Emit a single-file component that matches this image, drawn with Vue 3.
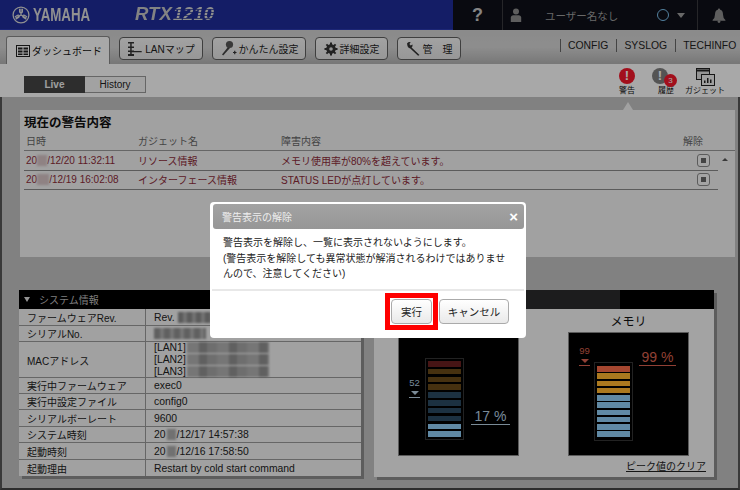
<script setup>
const navs = [
  { label: 'LANマップ', icon: 'lan', w: 84 },
  { label: 'かんたん設定', icon: 'key', w: 94 },
  { label: '詳細設定', icon: 'gear', w: 73 },
  { label: '管　理', icon: 'tool', w: 64 }
]
const alerts = [
  { pre: 20, maskW: 10, date: '/12/20 11:32:11', name: 'リソース情報', msg: 'メモリ使用率が80%を超えています。' },
  { pre: 20, maskW: 12, date: '/12/19 16:02:08', name: 'インターフェース情報', msg: 'STATUS LEDが点灯しています。' }
]
const cpuBars = ['r-off', 'o-off', 'o-off', 'o-off', 'b-off', 'b-off', 'b-off', 'b-off', 'b-on', 'b-on']
const memBars = ['r-on', 'o-on', 'o-on', 'o-on', 'b-on', 'b-on', 'b-on', 'b-on', 'b-on', 'b-on']
</script>

<template>
  <div class="app">
    <header class="top">
      <div class="brand">
        <svg class="emblem" viewBox="0 0 20 20" width="18" height="18">
          <circle cx="10" cy="10" r="8.8" fill="none" stroke="#d8d8d8" stroke-width="1.4" />
          <g stroke="#d8d8d8" stroke-width="1.3" fill="none">
            <path d="M10 10V3M8.4 3v3.4q0 1.2 1.6 1.6q1.6-.4 1.6-1.6V3" />
            <path d="M10 10L4 13.5M3.2 12.1l2.9-1.7q1.1-.5 2.2.5q-.3 1.5-1.5 2.2l-2.8 1.6" />
            <path d="M10 10L16 13.5M16.8 12.1l-2.9-1.7q-1.1-.5-2.2.5q.3 1.5 1.5 2.2l2.8 1.6" />
          </g>
        </svg>
        <span class="yamaha">YAMAHA</span>
        <span class="model">RTX<em>1210</em></span>
      </div>
      <div class="top-right">
        <span class="help">?</span>
        <div class="user">
          <svg width="12" height="14" viewBox="0 0 12 14"><circle cx="6" cy="3.4" r="3" fill="#8d8d8d" /><path d="M.8 14V9.6Q.8 7.4 3 7.2h6q2.2.2 2.2 2.4V14z" fill="#8d8d8d" /></svg>
          <span class="uname">ユーザー名なし</span>
          <i class="ring"></i>
          <i class="caret"></i>
        </div>
        <div class="bell">
          <svg width="14" height="15" viewBox="0 0 14 15"><path d="M7 .6q1.2 0 1.2 1.2Q11 2.6 11 6.5q0 3.5 2.4 5.6v.7H.6v-.7Q3 10 3 6.500q0-3.900 2.800-4.700Q5.800.6 7 .6z" fill="#8d8d8d" /><circle cx="7" cy="13.600" r="1.400" fill="#8d8d8d" /></svg>
        </div>
      </div>
    </header>

    <nav class="nav">
      <div class="tab">
        <svg width="14" height="12" viewBox="0 0 14 12"><rect x=".5" y=".5" width="13" height="11" fill="none" stroke="#222" /><path d="M2 2.500h4.500v2H2zM7.500 2.500H12v2H7.500zM2 5.500h4.500v2H2zM7.500 5.500H12v2H7.500zM2 8.500h4.500v1.500H2zM7.500 8.500H12v1.500H7.500z" fill="#222" /></svg>
        <span>ダッシュボード</span>
      </div>
      <button v-for="n in navs" :key="n.label" class="nav-btn" :style="{ width: n.w + 'px' }">
        <svg v-if="n.icon === 'lan'" width="16" height="16" viewBox="0 0 16 16"><path d="M1 1h6v1.500H1zM3.200 2.500h1.500v11H3.200zM1 5.500h6V7H1zM1 9.500h6V11H1zM1 13h6v2H1zM4.700 10h10v1.300h-10z" fill="#333" /></svg>
        <svg v-if="n.icon === 'key'" width="17" height="17" viewBox="0 0 17 17"><circle cx="9.500" cy="4.500" r="3.600" fill="#555" /><path d="M8 7L2 14.500l1.200 1L10 8z" fill="#444" /><path d="M13 12.500h3.500M14.750 10.750v3.500" stroke="#333" stroke-width="1.200" /></svg>
        <svg v-if="n.icon === 'gear'" width="14" height="14" viewBox="0 0 14 14"><circle cx="7" cy="7" r="3.600" fill="none" stroke="#333" stroke-width="2.400" /><path d="M7 .5v13M.5 7h13M2.400 2.400l9.200 9.200M11.600 2.400l-9.200 9.200" stroke="#333" stroke-width="2" /><circle cx="7" cy="7" r="1.800" fill="#ddd" /></svg>
        <svg v-if="n.icon === 'tool'" width="15" height="15" viewBox="0 0 15 15"><path d="M1 2.500Q2.500.6 4.700 1.200L3.400 3l1.200 1.400 1.900-1Q7 5.500 5.600 6.500L13.500 14l-1.400.8-7.800-7.300Q1.600 7.300 1 2.500z" fill="#333" /></svg>
        <span>{{ n.label }}</span>
      </button>
      <div class="links">
        <a>CONFIG</a><a>SYSLOG</a><a>TECHINFO</a>
      </div>
    </nav>

    <section class="sub">
      <div class="seg">
        <span class="seg-on">Live</span>
        <span class="seg-off">History</span>
      </div>
      <div class="tools">
        <div class="tool t1">
          <i class="dot red">!</i>
          <b>警告</b>
        </div>
        <div class="tool t2">
          <i class="dot grey">!<em>3</em></i>
          <b>履歴</b>
        </div>
        <div class="tool t3">
          <svg width="19" height="18" viewBox="0 0 19 18"><rect x=".5" y=".5" width="13" height="11" fill="#ddd" stroke="#222" /><path d="M.5 2.500h13" stroke="#222" stroke-width="2" /><rect x="5.500" y="6.500" width="13" height="11" fill="#eee" stroke="#222" /><path d="M8 15v-2.500h1.500V15zM11 15v-5h1.500v5zM14 15v-3.500h1.500V15z" fill="#222" /></svg>
          <b>ガジェット</b>
        </div>
      </div>
    </section>

    <main class="page">
      <section class="alert">
        <h2>現在の警告内容</h2>
        <div class="a-head">
          <span>日時</span><span>ガジェット名</span><span>障害内容</span><span class="a-clear">解除</span>
        </div>
        <div class="a-wrap">
          <div class="a-rows">
            <div v-for="a in alerts" :key="a.date" class="a-row">
              <span>{{ a.pre }}<i class="mask pink" :style="{ width: a.maskW + 'px' }"></i>{{ a.date }}</span>
              <span>{{ a.name }}</span>
              <span>{{ a.msg }}</span>
              <i class="check"><u></u></i>
            </div>
          </div>
          <i class="up"></i>
        </div>
      </section>

      <div class="bottom">
        <section class="sys">
          <div class="bar"><i class="down"></i><span>システム情報</span></div>
          <div class="row r17"><span class="k">ファームウェアRev.</span><span class="v">Rev.<i class="mask m1"></i></span></div>
          <div class="row r16"><span class="k">シリアルNo.</span><span class="v"><i class="mask m2"></i></span></div>
          <div class="row r36">
            <span class="k">MACアドレス</span>
            <span class="v stack">
              <span>[LAN1]<i class="mask m3"></i></span>
              <span>[LAN2]<i class="mask m3"></i></span>
              <span>[LAN3]<i class="mask m3"></i></span>
            </span>
          </div>
          <div class="row r16"><span class="k">実行中ファームウェア</span><span class="v">exec0</span></div>
          <div class="row r16"><span class="k">実行中設定ファイル</span><span class="v">config0</span></div>
          <div class="row r17"><span class="k">シリアルボーレート</span><span class="v">9600</span></div>
          <div class="row r16"><span class="k">システム時刻</span><span class="v">20<i class="mask m4"></i>/12/17 14:57:38</span></div>
          <div class="row r17"><span class="k">起動時刻</span><span class="v">20<i class="mask m4"></i>/12/16 17:58:50</span></div>
          <div class="row r16 last"><span class="k">起動理由</span><span class="v">Restart by cold start command</span></div>
        </section>

        <section class="res">
          <div class="bar res-bar"><span class="half"></span></div>
          <div class="gauges">
            <div class="gauge">
              <h3>&nbsp;</h3>
              <div class="screen cpu">
                <div class="peak blue"><span>52</span><i class="tri"></i><i class="dash"></i></div>
                <div class="meter"><i v-for="(b, i) in cpuBars" :key="i" :class="b"></i></div>
                <div class="val blue"><span>17 %</span></div>
              </div>
            </div>
            <div class="gauge">
              <h3>メモリ</h3>
              <div class="screen mem">
                <div class="peak red"><span>99</span><i class="tri"></i><i class="dash"></i></div>
                <div class="meter"><i v-for="(b, i) in memBars" :key="i" :class="b"></i></div>
                <div class="val red"><span>99 %</span></div>
              </div>
            </div>
          </div>
          <a class="clear">ピーク値のクリア</a>
        </section>
      </div>
    </main>

    <div class="overlay">
      <div class="modal">
        <div class="m-head"><span>警告表示の解除</span><b>×</b></div>
        <div class="m-body">
          警告表示を解除し、一覧に表示されないようにします。<br />
          (警告表示を解除しても異常状態が解消されるわけではありませんので、注意してください)
        </div>
        <div class="m-foot">
          <div class="hl"><button class="btn ok">実行</button></div>
          <button class="btn cancel">キャンセル</button>
        </div>
      </div>
    </div>
  </div>
</template>

<style scoped>
.app {
  position: relative;
  width: 740px;
  height: 490px;
  overflow: hidden;
  box-sizing: border-box;
  font-family: "Liberation Sans", "Noto Sans CJK JP", sans-serif;
  font-size: 10px;
  color: #222;
  background: #bfbfbf;
  display: flex;
  flex-direction: column;
}
button { font-family: inherit; padding: 0; }

.top {
  height: 30px;
  flex: none;
  display: flex;
  justify-content: space-between;
  background: #1e2c98;
  border-bottom: 1px solid #2a3ab0;
  box-sizing: border-box;
}
.brand { display: flex; align-items: center; padding-left: 12px; }
.emblem { margin-right: 3px; }
.yamaha {
  display: inline-block;
  width: 58px;
  font-size: 19px;
  font-weight: 700;
  color: #d8d8d8;
  transform: scaleX(.7);
  transform-origin: left center;
  white-space: nowrap;
}
.model {
  margin-left: 44px;
  font-size: 18px;
  font-weight: 700;
  font-style: italic;
  color: #c4c4c4;
  transform: scaleX(1.03);
  transform-origin: left center;
}
.model em {
  color: transparent;
  margin-left: 1px;
  background: repeating-linear-gradient(180deg, #d4d4d4 0 2px, #4a5599 2px 3px);
  -webkit-background-clip: text;
  background-clip: text;
}
.top-right {
  width: 287px;
  background: #0e1019;
  display: flex;
  align-items: center;
  color: #c0c0c0;
  margin-bottom: -1px;
}
.help {
  width: 50px;
  text-align: center;
  font-size: 18px;
  font-weight: 700;
  color: #c6c6c6;
  border-right: 1px solid #3a3a3e;
  height: 30px;
  line-height: 30px;
  box-sizing: border-box;
}
.user {
  width: 195px;
  height: 30px;
  display: flex;
  align-items: center;
  padding-left: 7px;
  border-right: 1px solid #3a3a3e;
  box-sizing: border-box;
}
.uname { margin-left: 23px; width: 112px; font-size: 10.500px; color: #9b9b9b; }
.ring { width: 10px; height: 10px; border: 1.500px solid #7cc0ec; border-radius: 50%; flex: none; }
.caret {
  margin-left: 8px;
  border-top: 5px solid #9c9c9c;
  border-left: 4px solid transparent;
  border-right: 4px solid transparent;
}
.bell { flex: 1; display: flex; justify-content: center; }

.nav {
  height: 34px;
  flex: none;
  display: flex;
  align-items: flex-start;
  padding-left: 6px;
  background: linear-gradient(180deg, #cfcfcf 0, #d3d3d3 50%, #b2b2b2 100%);
}
.tab {
  width: 104px;
  height: 28px;
  margin-top: 6px;
  box-sizing: border-box;
  background: #fbfbfb;
  border: 1px solid #888;
  border-bottom: 0;
  border-radius: 3px 3px 0 0;
  display: flex;
  align-items: center;
  gap: 2px;
  padding-left: 9px;
}
.tab span { white-space: nowrap; color: #111; }
.nav-btn {
  height: 23px;
  margin: 7px 0 0 9px;
  box-sizing: border-box;
  background: linear-gradient(180deg, #f2f2f2, #e2e2e2);
  border: 1px solid #5e5e5e;
  border-radius: 4px;
  display: flex;
  align-items: center;
  justify-content: center;
  gap: 2px;
  font-size: 10px;
  color: #222;
  white-space: nowrap;
}
.links {
  margin: 9px 0 0 99px;
  display: flex;
  font-size: 10.400px;
  line-height: 13px;
  color: #222;
}
.links a { padding: 0 0 0 7px; border-left: 1px solid #666; margin-right: 8px; white-space: nowrap; }
.links a:last-child { margin-right: 0; }

.sub {
  height: 33px;
  flex: none;
  position: relative;
  background: #fbfbfb;
  display: flex;
  justify-content: space-between;
}
.seg { display: flex; margin: 12px 0 0 24px; height: 17px; font-size: 10px; line-height: 17px; text-align: center; }
.seg-on { width: 61px; background: #444; color: #eee; font-weight: 700; }
.seg-off { width: 61px; box-sizing: border-box; border: 1px solid #999; border-left: 0; background: #f2f2f2; line-height: 15px; color: #222; }
.tools { display: flex; padding-right: 14px; }
.tool { display: flex; flex-direction: column; align-items: center; font-size: 8px; white-space: nowrap; }
.tool b { font-weight: 400; line-height: 10px; color: #111; }
.t1 { width: 32px; padding-top: 4px; }
.t2 { width: 34px; padding-top: 4px; margin-right: 7px; }
.t2 b { margin-left: 12px; }
.t3 { width: 42px; padding-top: 4px; }
.t3 svg { margin-bottom: 1px; }
.t3 b { margin-top: -1px; }
.dot {
  position: relative;
  width: 16px;
  height: 16px;
  border-radius: 50%;
  color: #fff;
  font: 700 13px/16px "Liberation Sans", sans-serif;
  text-align: center;
  margin-bottom: 2px;
}
.red { background: #f2172a; }
.grey { background: #7e7e7e; }
.dot em {
  position: absolute;
  left: 12px;
  top: 6px;
  width: 13px;
  height: 13px;
  border-radius: 50%;
  background: #f2172a;
  font: 400 8px/13px "Liberation Sans", sans-serif;
}

.page {
  flex: 1;
  background: #c0c0c0;
  padding-top: 13px;
  border-left: 2px solid #555;
  border-right: 2px solid #555;
  border-bottom: 2px solid #444;
  box-sizing: border-box;
  min-height: 0;
}
.alert {
  position: relative;
  width: 715px;
  height: 147px;
  margin-left: 18px;
  box-sizing: border-box;
  background: #f0f0f0;
  padding: 5px 0 0 4px;
}
.alert::before {
  content: "";
  position: absolute;
  right: 102px;
  top: -8px;
  border-bottom: 8px solid #f0f0f0;
  border-left: 5px solid transparent;
  border-right: 5px solid transparent;
}
.alert h2 { margin: 0; font-size: 12.500px; line-height: 15px; padding-top: 1px; font-weight: 700; color: #111; }
.a-head {
  display: grid;
  grid-template-columns: 112px 143px 402px 30px;
  padding: 4px 0 2px 2px;
  border-bottom: 1px solid #999;
  color: #666;
  line-height: 13px;
}
.a-clear { white-space: nowrap; }
.a-wrap { display: flex; }
.a-rows { width: 694px; }
.a-row {
  display: grid;
  grid-template-columns: 112px 143px 416px 13px;
  align-items: center;
  height: 19.500px;
  padding-left: 2px;
  box-sizing: border-box;
  border-bottom: 1px solid #888;
  color: #8c2b38;
  white-space: nowrap;
}
.up {
  margin: 7px 0 0 4px;
  height: 0;
  border-bottom: 3px solid #555;
  border-left: 3px solid transparent;
  border-right: 3px solid transparent;
}
.check {
  width: 13px;
  height: 13px;
  box-sizing: border-box;
  border: 1px solid #888;
  border-radius: 3px;
  background: #f5f5f5;
  display: flex;
  align-items: center;
  justify-content: center;
}
.check u { width: 5px; height: 5px; background: #666; }
.mask { display: inline-block; height: 11px; vertical-align: -2px; filter: blur(1px); }
.pink { background: #d5c2c4; }
.m1 { width: 36px; margin-left: 3px; background: repeating-linear-gradient(90deg, #888 0 5px, #aaa 5px 9px); }
.m2 { width: 52px; background: repeating-linear-gradient(90deg, #8f8f8f 0 6px, #b0b0b0 6px 10px); }
.m3 { width: 82px; margin-left: 1px; background: repeating-linear-gradient(90deg, #b0b0b0 0 12px, #8f8f8f 12px 20px, #a5a5a5 20px 30px); }
.m4 { width: 9px; margin: 0 1px; background: #a9a9a9; }

.bottom { display: flex; gap: 13px; margin: 33px 0 0 17px; }
.bar {
  height: 19px;
  background: #000;
  display: flex;
  align-items: center;
  color: #bbb;
}
.bar span { font-size: 10px; white-space: nowrap; }
.down {
  margin: 0 9px 0 5px;
  border-top: 5px solid #ddd;
  border-left: 3px solid transparent;
  border-right: 3px solid transparent;
}
.sys {
  width: 342px;
  height: 186px;
  box-sizing: border-box;
  background: #f0f0f0;
  box-shadow: 3px 3px 0 #8b8b8b;
}
.row {
  display: grid;
  grid-template-columns: 127px 1fr;
  box-sizing: border-box;
  border-bottom: 1px solid #999;
  font-size: 10px;
  color: #222;
}
.row.last { border-bottom: 0; }
.r16 { height: 16px; }
.r17 { height: 17px; }
.r36 { height: 36px; }
.k {
  display: flex;
  align-items: center;
  padding-left: 8px;
  border-right: 1px solid #999;
  white-space: nowrap;
  font-size: 10px;
}
.v { display: flex; align-items: center; padding-left: 8px; white-space: nowrap; font-size: 10.400px; }
.stack { flex-direction: column; align-items: flex-start; justify-content: center; line-height: 12px; }

.res {
  width: 340px;
  height: 187px;
  background: #f4f4f4;
  box-shadow: 3px 3px 0 #8b8b8b;
  display: flex;
  flex-direction: column;
}
.res-bar { justify-content: flex-end; background: #2a2a2c; }
.half { width: 94px; height: 19px; background: #000; }
.gauges { display: flex; padding: 4px 25px 0 24px; justify-content: space-between; }
.gauge { width: 121px; display: flex; flex-direction: column; align-items: center; }
.gauge h3 { margin: 0 0 1px; font-size: 12px; line-height: 18px; font-weight: 400; color: #111; }
.screen {
  width: 121px;
  height: 124px;
  box-sizing: border-box;
  background: #000;
  border: 1px solid #888;
  display: flex;
  align-items: flex-start;
}
.meter {
  width: 39px;
  height: 79px;
  box-sizing: border-box;
  border: 1px solid #333;
  padding: 3px 2px;
  display: flex;
  flex-direction: column;
  justify-content: space-between;
  flex: none;
}
.meter i { display: block; height: 5.500px; }
.r-off { background: #6a2020; }
.o-off { background: #694a18; }
.b-off { background: #2a4a62; }
.r-on { background: #f76a48; }
.o-on { background: #ffb52f; }
.b-on { background: #90cdf5; }
.peak { display: flex; flex-direction: column; align-items: center; font-size: 9.500px; line-height: 11px; flex: none; }
.tri {
  border-top: 4px solid currentColor;
  border-left: 4px solid transparent;
  border-right: 4px solid transparent;
  margin-top: 3px;
}
.dash { width: 11px; height: 1px; background: currentColor; margin-top: 2px; }
.blue { color: #b6cfe2; }
.red.peak, .red.val { background: none; color: #d9604f; }
.val { flex: none; }
.val span {
  display: block;
  font-size: 14px;
  line-height: 15px;
  padding-bottom: 0;
  text-align: center;
  border-bottom: 1px solid currentColor;
  white-space: nowrap;
}
.cpu { padding: 25px 0 0 10px; }
.cpu .peak { margin-top: 19px; margin-right: 5px; }
.cpu .meter { height: 82px; padding: 2px; margin-right: 7px; }
.cpu .val { margin-top: 51px; }
.cpu .val span { width: 39px; }
.mem { padding: 0 0 0 10px; }
.mem .peak { margin-top: 12px; margin-right: 4px; }
.mem .meter { margin-top: 29px; margin-right: 6px; }
.mem .val { margin-top: 17px; }
.mem .val span { width: 37px; }
.clear {
  margin: 4px 8px 0 auto;
  font-size: 10px;
  line-height: 13px;
  color: #222;
  text-decoration: underline;
}

.overlay {
  position: absolute;
  inset: 0;
  background: rgba(0, 0, 0, .33);
  padding: 202px 0 0 210px;
  box-sizing: border-box;
}
.modal {
  width: 316px;
  height: 136px;
  box-sizing: border-box;
  background: #fff;
  border-radius: 4px;
  padding: 2px;
  display: flex;
  flex-direction: column;
}
.m-head {
  height: 25px;
  flex: none;
  margin: 0 0 0 1px;
  background: linear-gradient(180deg, #a3a3a3, #969696);
  border-radius: 3px;
  color: #eee;
  display: flex;
  align-items: center;
  justify-content: space-between;
  padding: 0 6px 0 9px;
  font-size: 10px;
}
.m-head b { font-size: 15px; color: #fff; font-weight: 700; line-height: 15px; }
.m-body {
  height: 62px;
  flex: none;
  padding: 6px 12px 0 11px;
  box-sizing: border-box;
  font-size: 10px;
  line-height: 15.500px;
  color: #222;
  border-bottom: 2px solid #e8e8e8;
}
.m-foot { display: flex; padding: 2px 0 0 173px; align-items: flex-start; }
.hl { border: 5px solid #f00; padding: 1px; margin-right: 1px; display: flex; }
.btn {
  height: 25px;
  box-sizing: border-box;
  border: 1px solid #aaa;
  border-radius: 4px;
  background: linear-gradient(180deg, #fff, #e9e9e9);
  color: #222;
  font-size: 10.500px;
}
.ok { width: 41px; }
.cancel { width: 70px; margin-top: 6px; }
</style>
